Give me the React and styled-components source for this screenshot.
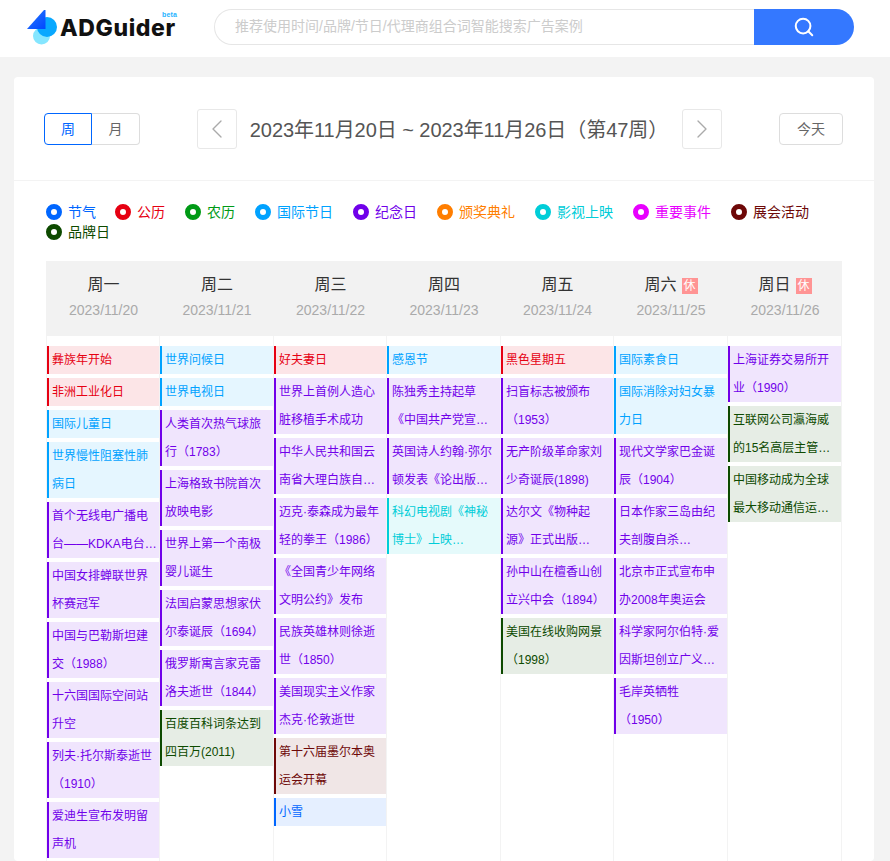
import styled, { createGlobalStyle } from 'styled-components';
import { Search, ChevronLeft, ChevronRight } from 'lucide-react';

const COLORS = {
    solar: '#0066ff',
    gregorian: '#e60012',
    lunar: '#009a16',
    intl: '#00a2ff',
    memorial: '#7000ea',
    award: '#ff7e00',
    film: '#00cdd8',
    major: '#e800ff',
    expo: '#6e0808',
    brand: '#0d4a00',
};

const LEGEND = [
    ['solar', '节气'],
    ['gregorian', '公历'],
    ['lunar', '农历'],
    ['intl', '国际节日'],
    ['memorial', '纪念日'],
    ['award', '颁奖典礼'],
    ['film', '影视上映'],
    ['major', '重要事件'],
    ['expo', '展会活动'],
    ['brand', '品牌日'],
];

const DAYS = [
    {
        name: '周一',
        date: '2023/11/20',
        events: [
            ['gregorian', '彝族年开始'],
            ['gregorian', '非洲工业化日'],
            ['intl', '国际儿童日'],
            ['intl', '世界慢性阻塞性肺病日'],
            ['memorial', '首个无线电广播电台——KDKA电台开播'],
            ['memorial', '中国女排蝉联世界杯赛冠军'],
            ['memorial', '中国与巴勒斯坦建交（1988）'],
            ['memorial', '十六国国际空间站升空'],
            ['memorial', '列夫·托尔斯泰逝世（1910）'],
            ['memorial', '爱迪生宣布发明留声机'],
        ],
    },
    {
        name: '周二',
        date: '2023/11/21',
        events: [
            ['intl', '世界问候日'],
            ['intl', '世界电视日'],
            ['memorial', '人类首次热气球旅行（1783）'],
            ['memorial', '上海格致书院首次放映电影'],
            ['memorial', '世界上第一个南极婴儿诞生'],
            ['memorial', '法国启蒙思想家伏尔泰诞辰（1694）'],
            ['memorial', '俄罗斯寓言家克雷洛夫逝世（1844）'],
            ['brand', '百度百科词条达到四百万(2011)'],
        ],
    },
    {
        name: '周三',
        date: '2023/11/22',
        events: [
            ['gregorian', '好夫妻日'],
            ['memorial', '世界上首例人造心脏移植手术成功'],
            ['memorial', '中华人民共和国云南省大理白族自治州成立（1956）'],
            ['memorial', '迈克·泰森成为最年轻的拳王（1986）'],
            ['memorial', '《全国青少年网络文明公约》发布'],
            ['memorial', '民族英雄林则徐逝世（1850）'],
            ['memorial', '美国现实主义作家杰克·伦敦逝世'],
            ['expo', '第十六届墨尔本奥运会开幕'],
            ['solar', '小雪'],
        ],
    },
    {
        name: '周四',
        date: '2023/11/23',
        events: [
            ['intl', '感恩节'],
            ['memorial', '陈独秀主持起草《中国共产党宣言》（1920）'],
            ['memorial', '英国诗人约翰·弥尔顿发表《论出版自由》'],
            ['film', '科幻电视剧《神秘博士》上映（1963）'],
        ],
    },
    {
        name: '周五',
        date: '2023/11/24',
        events: [
            ['gregorian', '黑色星期五'],
            ['memorial', '扫盲标志被颁布（1953）'],
            ['memorial', '无产阶级革命家刘少奇诞辰(1898)'],
            ['memorial', '达尔文《物种起源》正式出版（1859）'],
            ['memorial', '孙中山在檀香山创立兴中会（1894）'],
            ['brand', '美国在线收购网景（1998）'],
        ],
    },
    {
        name: '周六',
        date: '2023/11/25',
        off: true,
        events: [
            ['intl', '国际素食日'],
            ['intl', '国际消除对妇女暴力日'],
            ['memorial', '现代文学家巴金诞辰（1904）'],
            ['memorial', '日本作家三岛由纪夫剖腹自杀（1970）'],
            ['memorial', '北京市正式宣布申办2008年奥运会'],
            ['memorial', '科学家阿尔伯特·爱因斯坦创立广义相对论'],
            ['memorial', '毛岸英牺牲（1950）'],
        ],
    },
    {
        name: '周日',
        date: '2023/11/26',
        off: true,
        events: [
            ['memorial', '上海证券交易所开业（1990）'],
            ['brand', '互联网公司瀛海威的15名高层主管集体辞职'],
            ['brand', '中国移动成为全球最大移动通信运营商'],
        ],
    },
];

const GlobalStyle = createGlobalStyle`
    html, body{
        margin: 0;
        height: 861px;
        overflow: hidden;
        background: #f3f3f3;
        font-family: "Liberation Sans", "Noto Sans CJK SC", sans-serif;
        text-spacing-trim: space-all;
    }
    *{
        box-sizing: border-box;
    }
`;

const Header = styled.header`
    height: 57px;
    background: #fff;
    display: flex;
    align-items: flex-start;
    padding: 9px 0 0 27px;
`;

const Logo = styled.div`
    width: 187px;
    height: 36px;
    display: flex;
    gap: 1px;
    position: relative;
`;

const LogoText = styled.span`
    font-family: Inter, sans-serif;
    font-size: 23px;
    font-weight: 800;
    line-height: 36px;
    letter-spacing: 0.6px;
    color: #111;
    margin-top: 1px;
`;

const Beta = styled.span`
    position: absolute;
    left: 135px;
    top: 2px;
    font-size: 7px;
    font-weight: 700;
    letter-spacing: 0.2px;
    color: #27b4ff;
`;

const SearchBox = styled.div`
    width: 640px;
    height: 36px;
    display: flex;
`;

const SearchInput = styled.div`
    flex: 1;
    border: 1px solid #e6e6e6;
    border-right: none;
    border-radius: 18px 0 0 18px;
    padding-left: 20px;
    font-size: 14px;
    line-height: 32px;
    color: #ccc;
`;

const SearchButton = styled.div`
    width: 100px;
    background: #3478ff;
    border-radius: 0 18px 18px 0;
    display: flex;
    align-items: center;
    justify-content: center;
    color: #fff;
`;

const Card = styled.main`
    margin: 20px 16px 0 14px;
    background: #fff;
    border-radius: 4px;
    height: 784px;
    overflow: hidden;
`;

const Toolbar = styled.div`
    height: 104px;
    padding: 32px 31px 0 30px;
    display: flex;
    justify-content: space-between;
    align-items: flex-start;
    border-bottom: 1px solid #f3f3f3;
`;

const Toggle = styled.div`
    display: flex;
    margin-top: 4px;
`;

const ToggleButton = styled.div`
    width: 48px;
    height: 32px;
    font-size: 14px;
    line-height: 30px;
    text-align: center;
    color: ${p => (p.$active ? '#0066ff' : '#666')};
    border: 1px solid ${p => (p.$active ? '#0066ff' : '#ddd')};
    border-left-width: ${p => (p.$active ? '1px' : '0')};
    border-radius: ${p => (p.$active ? '4px 0 0 4px' : '0 4px 4px 0')};
`;

const DateNav = styled.div`
    display: flex;
    align-items: center;
    justify-content: space-between;
    width: 525px;
`;

const ArrowButton = styled.div`
    width: 40px;
    height: 40px;
    border: 1px solid #e8e8e8;
    border-radius: 3px;
    display: flex;
    align-items: center;
    justify-content: center;
    color: #aaa;
`;

const DateTitle = styled.div`
    font-size: 20px;
    line-height: 28px;
    letter-spacing: -0.05px;
    color: #555;
    white-space: nowrap;
    margin: 2px 1px 0 0;
`;

const TodayButton = styled.div`
    width: 64px;
    height: 32px;
    margin-top: 4px;
    border: 1px solid #ddd;
    border-radius: 4px;
    font-size: 14px;
    line-height: 30px;
    text-align: center;
    color: #666;
`;

const Legend = styled.div`
    display: flex;
    flex-wrap: wrap;
    align-content: flex-start;
    padding: 21px 30px 0 32px;
    height: 80px;
`;

const LegendItem = styled.div`
    display: flex;
    align-items: center;
    height: 20px;
    gap: 6px;
    margin-right: 20px;
    font-size: 14px;
    line-height: 20px;
    color: ${p => p.$color};
    &:first-child{
        margin-right: 19px;
    }
`;

const Dot = styled.span`
    width: 16px;
    height: 16px;
    border-radius: 50%;
    border: 5px solid ${p => p.$color};
`;

const Week = styled.div`
    display: grid;
    grid-template-columns: 1px 113px 114px 113px 114px 113px 114px 114px;
    grid-template-rows: 75px auto;
    margin-left: 32px;
    width: 796px;
`;

const DayHead = styled.div`
    background: #f2f2f2;
    text-align: center;
`;

const HeadSpacer = styled.div`
    background: #f2f2f2;
`;

const DayName = styled.div`
    height: 17px;
    margin-top: 16px;
    display: flex;
    justify-content: center;
    align-items: flex-start;
    gap: 5px;
    font-size: 16px;
    line-height: 16px;
    color: #333;
`;

const OffBadge = styled.span`
    width: 16px;
    height: 16px;
    margin-top: 1px;
    background: #ff9494;
    color: #fff;
    font-size: 12px;
    line-height: 16px;
`;

const DayDate = styled.div`
    margin-top: 8px;
    font-size: 14px;
    color: #aaa;
`;

const BodySpacer = styled.div`
    background: #f3f3f3;
`;

const DayColumn = styled.div`
    padding-top: 10px;
    border-right: 1px solid #f3f3f3;
    display: flex;
    flex-direction: column;
    gap: 4px;
    height: 600px;
`;

const Event = styled.div`
    padding: 0 2px 0 3px;
    border-left: 2px solid ${p => p.$color};
    background: ${p => p.$color}1a;
    color: ${p => p.$color};
    font-size: 12px;
    line-height: 28px;
    display: -webkit-box;
    -webkit-box-orient: vertical;
    -webkit-line-clamp: 2;
    overflow: hidden;
    flex-shrink: 0;
`;

const LogoMark = () => (
    <svg width="32" height="36" viewBox="0 0 32 36">
        <defs>
            <linearGradient id="mark" x1="0" y1="0" x2="1" y2="1">
                <stop offset="0" stopColor="#2a7bff" />
                <stop offset="1" stopColor="#0047ff" />
            </linearGradient>
        </defs>
        <circle cx="14.5" cy="27" r="8.5" fill="#85e6ff" />
        <circle cx="20" cy="18" r="10" fill="#09a8ff" />
        <path d="M17 1 0 20h18.5V1z" fill="url(#mark)" />
    </svg>
);

const App = () => {
    return (
        <>
            <GlobalStyle />
            <Header>
                <Logo>
                    <LogoMark />
                    <LogoText>ADGuider</LogoText>
                    <Beta>beta</Beta>
                </Logo>
                <SearchBox>
                    <SearchInput>推荐使用时间/品牌/节日/代理商组合词智能搜索广告案例</SearchInput>
                    <SearchButton>
                        <Search size={22} strokeWidth={2.2} />
                    </SearchButton>
                </SearchBox>
            </Header>
            <Card>
                <Toolbar>
                    <Toggle>
                        <ToggleButton $active>周</ToggleButton>
                        <ToggleButton>月</ToggleButton>
                    </Toggle>
                    <DateNav>
                        <ArrowButton>
                            <ChevronLeft size={32} strokeWidth={1} />
                        </ArrowButton>
                        <DateTitle>2023年11月20日 ~ 2023年11月26日（第47周）</DateTitle>
                        <ArrowButton>
                            <ChevronRight size={32} strokeWidth={1} />
                        </ArrowButton>
                    </DateNav>
                    <TodayButton>今天</TodayButton>
                </Toolbar>
                <Legend>
                    {LEGEND.map(([key, label]) => (
                        <LegendItem key={key} $color={COLORS[key]}>
                            <Dot $color={COLORS[key]} />
                            {label}
                        </LegendItem>
                    ))}
                </Legend>
                <Week>
                    <HeadSpacer />
                    {DAYS.map(day => (
                        <DayHead key={day.name}>
                            <DayName>
                                {day.name}
                                {day.off && <OffBadge>休</OffBadge>}
                            </DayName>
                            <DayDate>{day.date}</DayDate>
                        </DayHead>
                    ))}
                    <BodySpacer />
                    {DAYS.map(day => (
                        <DayColumn key={day.name}>
                            {day.events.map(([key, text]) => (
                                <Event key={text} $color={COLORS[key]}>{text}</Event>
                            ))}
                        </DayColumn>
                    ))}
                </Week>
            </Card>
        </>
    );
}

export default App;
